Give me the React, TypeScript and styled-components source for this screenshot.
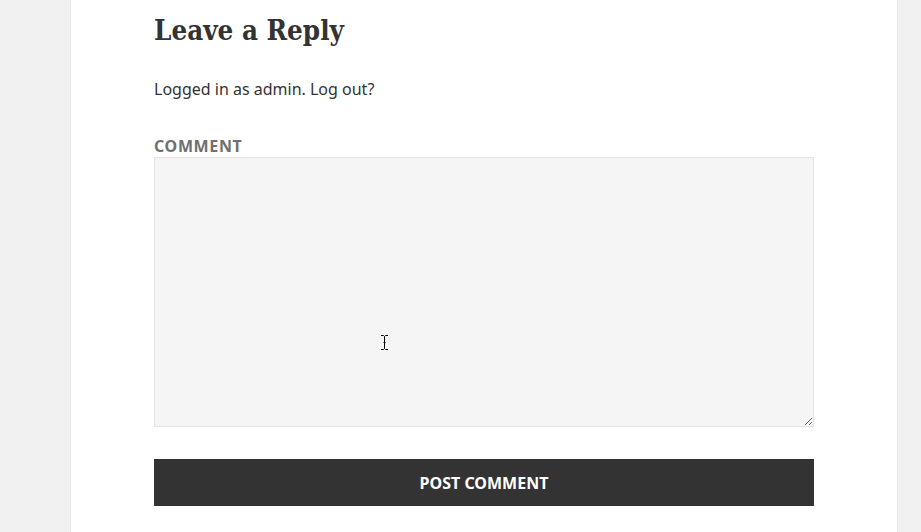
import styled, { createGlobalStyle } from "styled-components"

const Global = createGlobalStyle`
  html, body {
    margin: 0;
    padding: 0;
    background: #f1f1f1;
    height: 100%;
    overflow: hidden;
  }
  #root {
    height: 100%;
  }
`

const Page = styled.div`
  display: flex;
  height: 100%;
  padding-left: 70px;
`

const Panel = styled.main`
  position: relative;
  width: 828px;
  height: 100%;
  background: #fff;
  border-left: 1px solid #e6e6e6;
  border-right: 1px solid #e6e6e6;
  padding: 14px 83px 0 83px;
  box-sizing: border-box;
`

const Title = styled.h3`
  margin: 0;
  font-family: "DejaVu Serif Condensed", "DejaVu Serif", serif;
  font-weight: 700;
  font-size: 27.5px;
  line-height: 1.2;
  color: #333;
`

const LoggedIn = styled.p`
  margin: 30px 0 0;
  font-family: "Noto Sans", "Open Sans", sans-serif;
  font-size: 16px;
  line-height: 1.5;
  color: #333;
`

const Form = styled.form`
  display: flex;
  flex-direction: column;
  margin-top: 37px;
`

const Label = styled.label`
  font-family: "Noto Sans", "Open Sans", sans-serif;
  font-weight: 700;
  font-size: 16px;
  line-height: 1;
  letter-spacing: 0.04em;
  text-transform: uppercase;
  color: #707070;
  margin-bottom: 3px;
`

const TextArea = styled.textarea`
  display: block;
  width: 660px;
  height: 270px;
  box-sizing: border-box;
  margin: 0;
  padding: 10px;
  background: #f5f5f5;
  border: 1px solid #e4e4e4;
  font-family: "Noto Sans", sans-serif;
  font-size: 16px;
  color: #333;
  outline: none;
`

const Submit = styled.button`
  margin-top: 32px;
  width: 660px;
  height: 47px;
  border: 0;
  background: #333;
  color: #fff;
  font-family: "Noto Sans", "Open Sans", sans-serif;
  font-weight: 700;
  font-size: 16px;
  text-transform: uppercase;
  cursor: pointer;
`

const Cursor = styled.svg`
  position: absolute;
  left: 309px;
  top: 334px;
  pointer-events: none;
`

export default function App() {
  return (
    <>
      <Global />
      <Page>
        <Panel>
          <Title>Leave a Reply</Title>
          <LoggedIn>Logged in as admin. Log out?</LoggedIn>
          <Form onSubmit={(e) => e.preventDefault()}>
            <Label htmlFor="comment">Comment</Label>
            <TextArea id="comment" />
            <Submit type="submit">Post Comment</Submit>
          </Form>
          <Cursor width="9" height="17" viewBox="0 0 9 17">
            <path d="M1 1.5h2.5l1 1 1-1H8M4.5 2.5v12M1 15.5h2.5l1-1 1 1H8M3.5 8.5h2" stroke="#000" strokeWidth="1" fill="none" />
          </Cursor>
        </Panel>
      </Page>
    </>
  )
}
